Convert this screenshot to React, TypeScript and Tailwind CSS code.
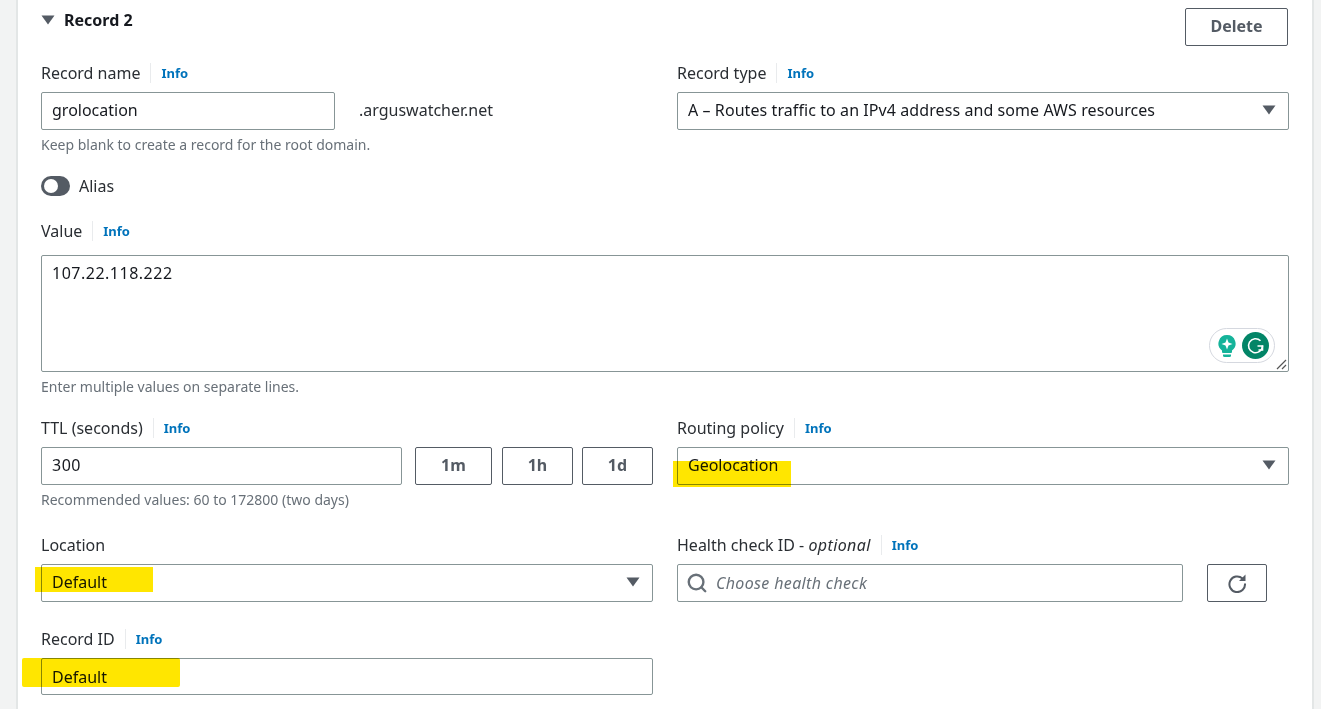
import React from 'react';
import { Search } from 'lucide-react';

function Info() {
  return <span className="ml-[10px] border-l border-[#e9ebed] pl-[10px] text-[13px] font-bold leading-[20px] text-[#0073bb]">Info</span>;
}

function Label({ text, info = true, children }: { text?: string; info?: boolean; children?: React.ReactNode }) {
  return (
    <div className="flex h-[20px] items-center text-[16px] leading-[20px] text-[#2a2e33]">
      {text}{children}
      {info && <Info />}
    </div>
  );
}

function Caret() {
  return (
    <svg width="14" height="10" viewBox="0 0 14 10" className="shrink-0 text-[#545b64]">
      <path d="M0.5 0.5h13L7 9.5z" fill="currentColor" />
    </svg>
  );
}

function Field({ value, caret, className = '' }: { value: string; caret?: boolean; className?: string }) {
  return (
    <div className={`flex h-[38px] items-center justify-between rounded-[2px] border border-[#879596] bg-white pb-[2px] pl-[10px] pr-[12px] text-[16px] text-[#16191f] ${className}`}>
      <span>{value}</span>
      {caret && <Caret />}
    </div>
  );
}

function Hint({ children }: { children: React.ReactNode }) {
  return <p className="mt-[6px] text-[14px] leading-[18px] text-[#687078]">{children}</p>;
}

function Btn({ label, className = '' }: { label: string; className?: string }) {
  return (
    <div className={`flex h-[38px] items-center justify-center rounded-[2px] border border-[#545b64] bg-white pb-[3px] text-[16px] font-bold text-[#545b64] ${className}`}>
      {label}
    </div>
  );
}

function Mark({ className }: { className: string }) {
  return <div className={`pointer-events-none absolute bg-[#ffe600] mix-blend-multiply ${className}`} />;
}

export default function App() {
  return (
    <div className="h-[709px] w-[1321px] overflow-hidden bg-[#f2f3f3] pl-[16px] pr-[7px] font-['Noto_Sans',sans-serif]">
      <div className="relative h-full border-x-2 border-[#e3e6e6] bg-white pl-[23px] pr-[23px]">
        {/* header */}
        <div className="flex h-[46px] items-start justify-between pt-[8px]">
          <div className="flex h-[24px] items-center gap-[9px] text-[16px] font-bold text-[#16191f]">
            <svg width="14" height="10" viewBox="0 0 14 10" className="text-[#545b64]"><path d="M0.5 0.5h13L7 9.5z" fill="currentColor" /></svg>
            Record 2
          </div>
          <Btn label="Delete" className="mr-[1px] w-[103px]" />
        </div>

        {/* name and type */}
        <div className="mt-[17px] grid grid-cols-2 gap-x-[24px]">
          <div>
            <Label text="Record name" />
            <div className="mt-[9px] flex items-center">
              <Field value="grolocation" className="w-[294px]" />
              <span className="ml-[24px] pb-[2px] text-[16px] text-[#2a2e33]">.arguswatcher.net</span>
            </div>
            <Hint>Keep blank to create a record for the root domain.</Hint>
          </div>
          <div>
            <Label text="Record type" />
            <Field value="A – Routes traffic to an IPv4 address and some AWS resources" caret className="mt-[9px] tracking-[0.08px]" />
          </div>
        </div>

        {/* alias */}
        <div className="mt-[22px] flex h-[20px] items-center gap-[9px] text-[16px] text-[#2a2e33]">
          <div className="flex h-[20px] w-[29px] items-center rounded-full bg-[#545b64] pl-[3px]">
            <div className="h-[14px] w-[14px] rounded-full bg-white" />
          </div>
          Alias
        </div>

        {/* value */}
        <div className="mt-[25px]">
          <Label text="Value" />
          <div className="relative mt-[14px] h-[117px] rounded-[2px] border border-[#879596] bg-white px-[10px] py-[5px] text-[16px] tracking-[0.5px] text-[#16191f]">
            107.22.118.222
            <div className="absolute bottom-[8px] right-[13px] flex h-[35px] w-[66px] items-center gap-[6px] rounded-full border border-[#d5d8df] bg-white pl-[8px]">
              <svg width="18" height="24" viewBox="0 0 18 24">
                <path d="M9 1a8.5 8.5 0 0 1 5 15.4V18a1 1 0 0 1-1 1H5a1 1 0 0 1-1-1v-1.6A8.5 8.5 0 0 1 9 1z" fill="#15b39a" />
                <path d="M5 20.5h8v1a1.5 1.5 0 0 1-1.5 1.5h-5A1.5 1.5 0 0 1 5 21.5z" fill="#15b39a" />
                <path d="M9 4.5l1.5 4 4 1.500-4 1.500-1.500 4-1.500-4-4-1.500 4-1.500z" fill="#fff" />
              </svg>
              <svg width="27" height="27" viewBox="0 0 27 27">
                <circle cx="13.500" cy="13.500" r="13.500" fill="#028567" />
                <path d="M18.500 8.800A7 7 0 1 0 20.500 14h-5" fill="none" stroke="#fff" strokeWidth="1.600" />
                <path d="M20.500 13.500v4.500h-4" fill="none" stroke="#fff" strokeWidth="1.600" />
              </svg>
            </div>
            <svg width="12" height="12" viewBox="0 0 12 12" className="absolute bottom-[1px] right-[1px] text-[#555]">
              <path d="M11 2L2 11M11 7L7 11" stroke="currentColor" strokeWidth="1.200" />
            </svg>
          </div>
          <Hint>Enter multiple values on separate lines.</Hint>
        </div>

        {/* ttl and routing */}
        <div className="mt-[22px] grid grid-cols-2 gap-x-[24px]">
          <div>
            <Label text="TTL (seconds)" />
            <div className="mt-[9px] flex gap-[10px]">
              <Field value="300" className="mr-[3px] w-[361px] tracking-[0.5px]" />
              <Btn label="1m" className="w-[77px]" />
              <Btn label="1h" className="mr-[-1px] w-[71px]" />
              <Btn label="1d" className="w-[71px]" />
            </div>
            <Hint>Recommended values: 60 to 172800 (two days)</Hint>
          </div>
          <div>
            <Label text="Routing policy" />
            <Field value="Geolocation" caret className="mt-[9px]" />
          </div>
        </div>

        {/* location and health check */}
        <div className="mt-[26px] grid grid-cols-2 gap-x-[24px]">
          <div>
            <Label text="Location" info={false} />
            <Field value="Default" caret className="mt-[9px]" />
          </div>
          <div>
            <Label>
              Health check ID -&nbsp;<i className="tracking-[0.4px]">optional</i>
            </Label>
            <div className="mt-[9px] flex items-center">
              <div className="flex h-[38px] w-[506px] items-center gap-[8px] rounded-[2px] border border-[#879596] bg-white pl-[8px] text-[16px] italic tracking-[0.35px] text-[#687078]">
                <Search size={22} strokeWidth={2.6} className="text-[#687078]" />
                Choose health check
              </div>
              <div className="ml-[24px] flex h-[38px] w-[60px] items-center justify-center rounded-[2px] border border-[#545b64]">
                <svg width="20" height="20" viewBox="0 0 20 20" className="text-[#545b64]">
                  <path d="M15.500 5.500A7.800 7.800 0 1 0 18 10.500" fill="none" stroke="currentColor" strokeWidth="2" />
                  <path d="M18.500 1.500v6.500h-6.500z" fill="currentColor" />
                </svg>
              </div>
            </div>
          </div>
        </div>

        {/* record id */}
        <div className="mt-[27px] grid grid-cols-2 gap-x-[24px]">
          <div>
            <Label text="Record ID" />
            <Field value="Default" className="mt-[9px] !h-[37px] !pb-0" />
          </div>
        </div>

        {/* yellow marker strokes drawn over the screenshot */}
        <Mark className="left-[655px] top-[461px] h-[26px] w-[118px]" />
        <Mark className="left-[17px] top-[567px] h-[25px] w-[118px]" />
        <Mark className="left-[4px] top-[658px] h-[29px] w-[158px] rounded-[2px]" />
      </div>
    </div>
  );
}
